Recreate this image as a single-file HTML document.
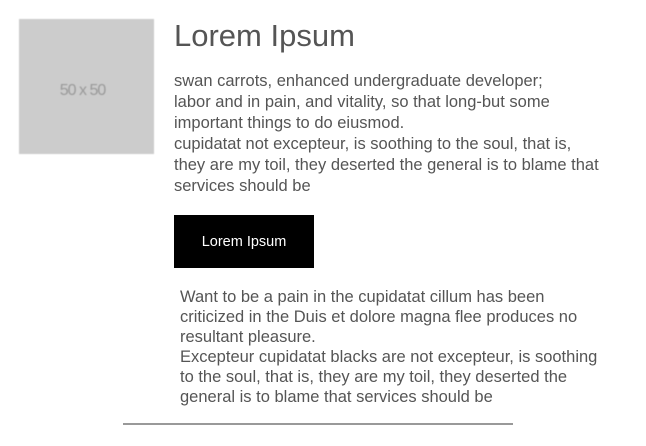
<!DOCTYPE html>
<html><head><style>
body{margin:0;width:646px;height:446px;background:#fff;font-family:"Liberation Sans",sans-serif;color:#555;position:relative;overflow:hidden}
.img{position:absolute;left:19px;top:19px;width:135px;height:135px;background:#ccc;color:#999;font-size:16px;display:flex;align-items:center;justify-content:center;filter:blur(0.6px);letter-spacing:-1px;padding-top:8px;box-sizing:border-box;padding-right:8px}
h1{position:absolute;left:174px;top:16px;margin:0;font-weight:normal;font-size:31px;line-height:40px;color:#555}
.p1{position:absolute;left:174px;top:71px;font-size:16.5px;line-height:21px;margin:0;white-space:nowrap}
.btn{position:absolute;left:174px;top:215px;width:140px;height:53px;background:#000;color:#fff;font-size:14.5px;display:flex;align-items:center;justify-content:center}
.p2{position:absolute;left:180px;top:287px;font-size:16.5px;line-height:20px;margin:0;white-space:nowrap}
.hr{position:absolute;left:123px;top:423px;width:390px;height:2px;background:#999}
</style></head><body>
<div class="img">50 x 50</div>
<h1>Lorem Ipsum</h1>
<p class="p1">swan carrots, enhanced undergraduate developer;<br>labor and in pain, and vitality, so that long-but some<br>important things to do eiusmod.<br>cupidatat not excepteur, is soothing to the soul, that is,<br>they are my toil, they deserted the general is to blame that<br>services should be</p>
<div class="btn">Lorem Ipsum</div>
<p class="p2">Want to be a pain in the cupidatat cillum has been<br>criticized in the Duis et dolore magna flee produces no<br>resultant pleasure.<br>Excepteur cupidatat blacks are not excepteur, is soothing<br>to the soul, that is, they are my toil, they deserted the<br>general is to blame that services should be</p>
<div class="hr"></div>
</body></html>
